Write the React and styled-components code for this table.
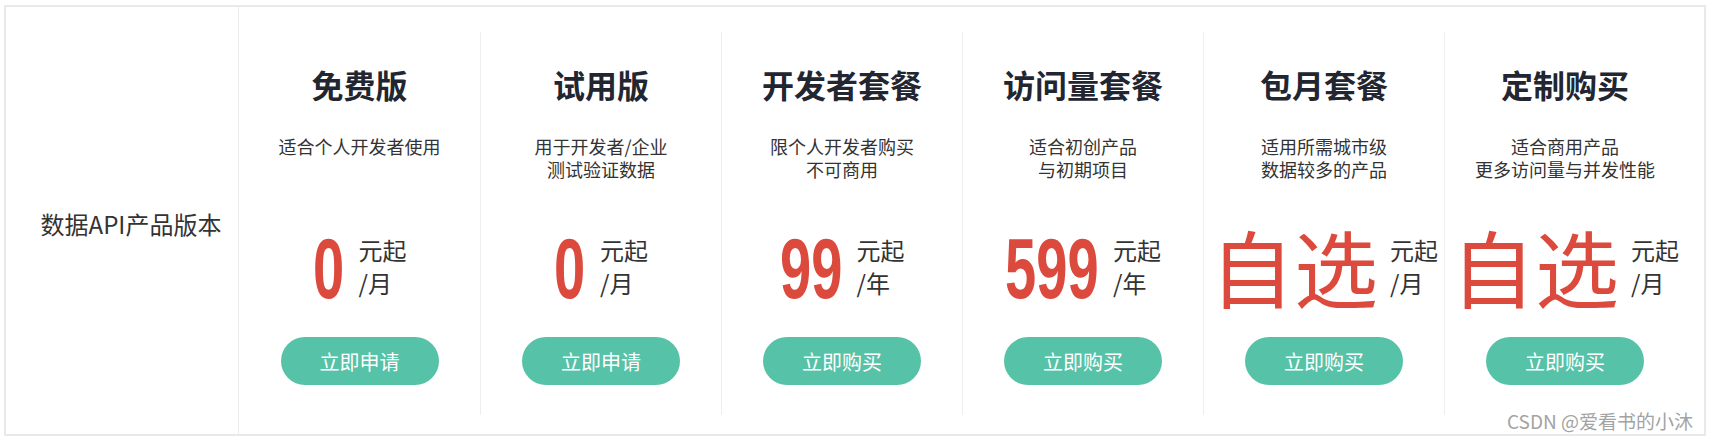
import React from 'react'
import styled, { createGlobalStyle } from 'styled-components'

const GlobalStyle = createGlobalStyle`
  body {
    margin: 0;
    background: #ffffff;
    font-family: "Noto Sans CJK SC", "Liberation Sans", sans-serif;
  }
`

const Frame = styled.div`
  position: relative;
  box-sizing: border-box;
  width: 1702px;
  height: 431px;
  margin: 5px 0 0 4px;
  border: 2px solid #e9e9e9;
  display: flex;
  background: #fff;
`

const Label = styled.div`
  flex: 0 0 233px;
  box-sizing: border-box;
  border-right: 1px solid #ececec;
  display: flex;
  align-items: center;
  justify-content: center;
  padding: 5px 0 0 18px;
  font-size: 24px;
  color: #333;
`

const Plans = styled.div`
  display: flex;
  padding: 25px 0 19px;
`

const Plan = styled.div`
  flex: 0 0 241px;
  box-sizing: border-box;
  display: flex;
  flex-direction: column;
  align-items: center;
  padding-top: 32px;

  & + & {
    border-left: 1px solid #eeeeee;
  }
`

const Title = styled.h2`
  margin: 0;
  font-size: 32px;
  font-weight: 700;
  line-height: 40px;
  color: #222631;
`

const Desc = styled.p`
  margin: 31px 0 0;
  min-height: 46px;
  font-size: 18px;
  line-height: 23px;
  text-align: center;
  color: #333;
`

const Price = styled.div`
  margin-top: 40px;
  height: 90px;
  display: flex;
  align-items: center;
  gap: ${p => (p.$word ? '12px' : '15px')};
`

const Amount = styled.div`
  width: ${p => p.$digits * 31}px;
  padding-top: 4px;
  color: #dc4a3d;
  font-family: "Liberation Sans", sans-serif;
  font-weight: 700;
  font-size: 85px;
  line-height: 1;
  white-space: nowrap;
`

const Digits = styled.span`
  display: inline-block;
  transform: scaleX(0.66);
  transform-origin: left center;
`

const Word = styled.div`
  color: #dc4a3d;
  font-size: 84px;
  font-weight: 400;
  line-height: 1;
  white-space: nowrap;
`

const Unit = styled.div`
  display: flex;
  flex-direction: column;
  font-size: 24px;
  line-height: 33px;
  color: #333;
  white-space: nowrap;
`

const Button = styled.button`
  margin-top: 26px;
  width: 158px;
  height: 48px;
  border: none;
  border-radius: 24px;
  background: #56c2a7;
  color: #fff;
  font-family: inherit;
  font-size: 20px;
  cursor: pointer;
`

const Watermark = styled.div`
  position: absolute;
  right: 11px;
  bottom: 2px;
  font-size: 19px;
  line-height: 22px;
  color: #a3a3a3;
  text-shadow: 0 0 2px #fff;
`

const plans = [
  { title: '免费版', desc: ['适合个人开发者使用'], price: '0', per: '/月', action: '立即申请' },
  { title: '试用版', desc: ['用于开发者/企业', '测试验证数据'], price: '0', per: '/月', action: '立即申请' },
  { title: '开发者套餐', desc: ['限个人开发者购买', '不可商用'], price: '99', per: '/年', action: '立即购买' },
  { title: '访问量套餐', desc: ['适合初创产品', '与初期项目'], price: '599', per: '/年', action: '立即购买' },
  { title: '包月套餐', desc: ['适用所需城市级', '数据较多的产品'], word: '自选', per: '/月', action: '立即购买' },
  { title: '定制购买', desc: ['适合商用产品', '更多访问量与并发性能'], word: '自选', per: '/月', action: '立即购买' },
]

const App = () => {
  return (
    <>
      <GlobalStyle />
      <Frame>
        <Label>数据API产品版本</Label>
        <Plans>
          {plans.map(plan => (
            <Plan key={plan.title}>
              <Title>{plan.title}</Title>
              <Desc>
                {plan.desc.map((line, i) => (
                  <React.Fragment key={i}>
                    {i > 0 && <br />}
                    {line}
                  </React.Fragment>
                ))}
              </Desc>
              <Price $word={!!plan.word}>
                {plan.word ? (
                  <Word>{plan.word}</Word>
                ) : (
                  <Amount $digits={plan.price.length}>
                    <Digits>{plan.price}</Digits>
                  </Amount>
                )}
                <Unit>
                  <span>元起</span>
                  <span>{plan.per}</span>
                </Unit>
              </Price>
              <Button>{plan.action}</Button>
            </Plan>
          ))}
        </Plans>
        <Watermark>CSDN @爱看书的小沐</Watermark>
      </Frame>
    </>
  )
}

export default App
